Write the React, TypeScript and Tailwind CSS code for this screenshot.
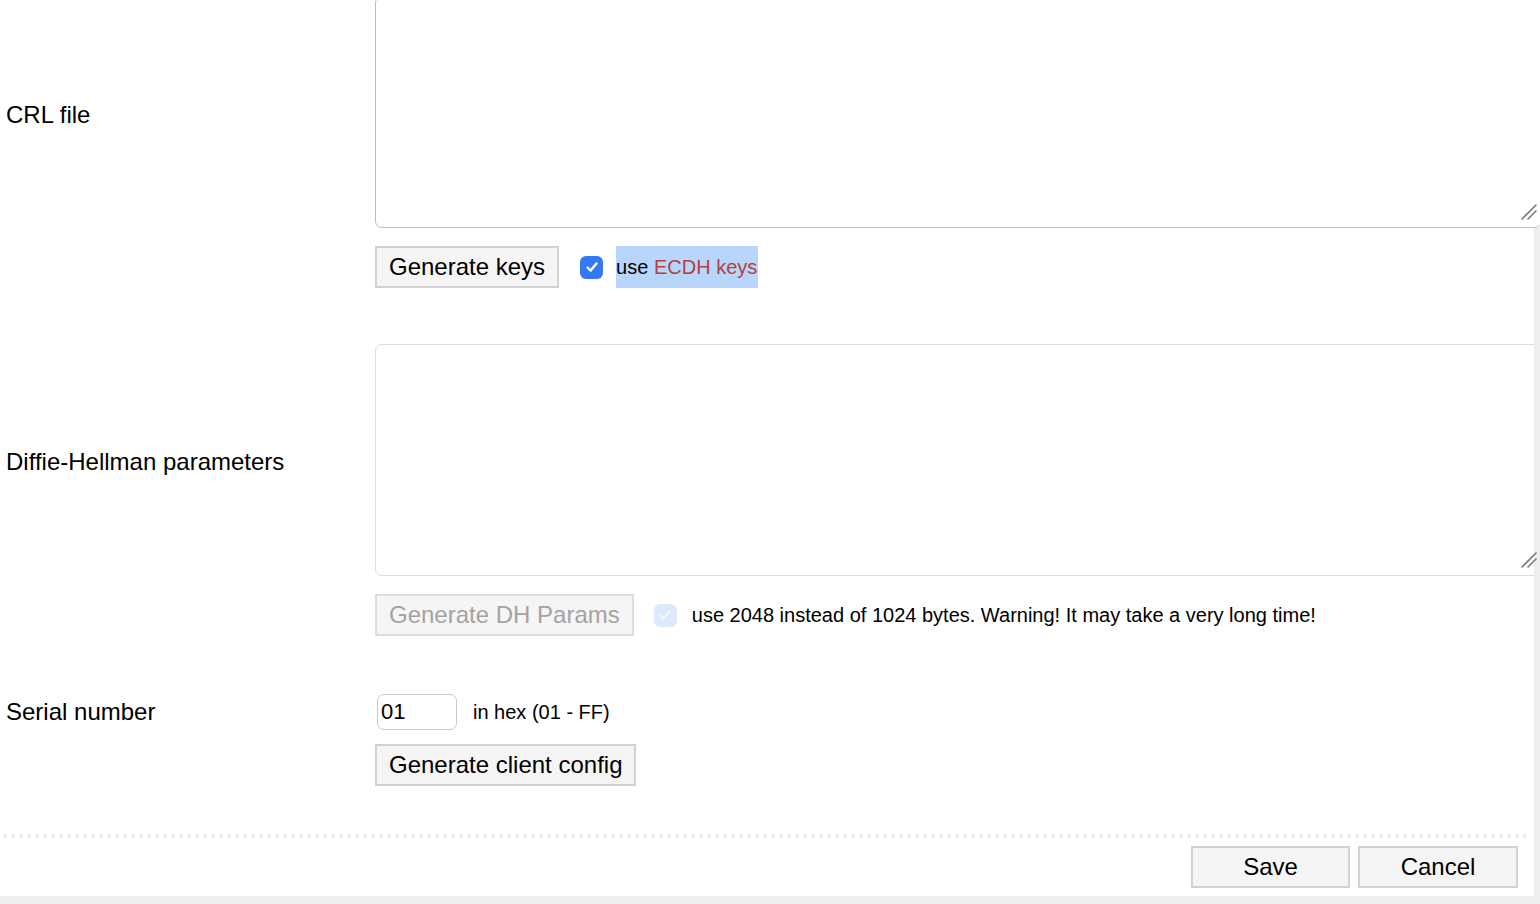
import React from "react";

function Check({ disabled }: { disabled?: boolean }) {
  return (
    <div
      className={
        "w-[23px] h-[23px] rounded-[6px] flex items-center justify-center shrink-0 " +
        (disabled ? "bg-[#dce8fb]" : "bg-[#3478f6]")
      }
    >
      <svg width="16" height="16" viewBox="0 0 16 16">
        <path
          d="M3.5 8.5 L6.6 11.6 L12.5 4.5"
          fill="none"
          stroke={disabled ? "#f3f7fe" : "#ffffff"}
          strokeWidth="2.4"
          strokeLinecap="round"
          strokeLinejoin="round"
        />
      </svg>
    </div>
  );
}

function Btn({ children, disabled, className }: { children: React.ReactNode; disabled?: boolean; className?: string }) {
  return (
    <button
      className={
        "h-[42px] px-[12px] border-2 bg-[#f5f5f5] text-[24px] leading-none whitespace-nowrap " +
        (disabled ? "border-[#dcdcdc] text-[#a3a3a3]" : "border-[#d2d2d2] text-black") +
        " " +
        (className || "")
      }
    >
      {children}
    </button>
  );
}

function Handle() {
  return (
    <svg
      width="17"
      height="16"
      viewBox="0 0 17 16"
      className="absolute left-[1146px] bottom-[8px] z-20 pointer-events-none"
    >
      <path d="M1 15 L15 1" stroke="#7a7a7a" strokeWidth="1.6" strokeLinecap="round" />
      <path d="M7 15 L15 7" stroke="#7a7a7a" strokeWidth="1.6" strokeLinecap="round" />
    </svg>
  );
}

export default function App() {
  return (
    <div
      className="relative h-[904px] w-[1540px] overflow-hidden bg-[#eeeeee] text-black"
      style={{ fontFamily: '"Liberation Sans", Arial, sans-serif' }}
    >
      <div className="h-[896px] w-[1540px] bg-white flex flex-col">
        {/* CRL file */}
        <div className="flex mt-[-4px]">
          <div className="w-[375px] h-[232px] pl-[6px] pt-[6px] flex items-center text-[24px] shrink-0">CRL file</div>
          <div className="relative shrink-0">
            <textarea className="block w-[1167px] h-[232px] resize-none border border-[#bdbdbd] rounded-[7px] bg-white outline-none" />
            <Handle />
          </div>
        </div>
        <div className="ml-[375px] mt-[18px] flex items-center h-[42px]">
          <Btn>Generate keys</Btn>
          <div className="ml-[21px]">
            <Check />
          </div>
          <span className="ml-[13px] h-[42px] flex items-center bg-[#b8d6fb] text-[20px] pr-[1px]">
            use&nbsp;<span className="text-[#b0413e]">ECDH keys</span>
          </span>
        </div>

        {/* Diffie-Hellman */}
        <div className="flex mt-[56px]">
          <div className="w-[375px] h-[232px] pl-[6px] pt-[4px] flex items-center text-[24px] shrink-0">
            Diffie-Hellman parameters
          </div>
          <div className="relative shrink-0">
            <textarea className="block w-[1167px] h-[232px] resize-none border border-[#dcdcdc] rounded-[7px] bg-white outline-none" />
            <Handle />
          </div>
        </div>
        <div className="ml-[375px] mt-[18px] flex items-center h-[42px]">
          <Btn disabled>Generate DH Params</Btn>
          <div className="ml-[20px]">
            <Check disabled />
          </div>
          <span className="ml-[15px] text-[20px]">
            use 2048 instead of 1024 bytes. Warning! It may take a very long time!
          </span>
        </div>

        {/* Serial number */}
        <div className="flex items-center mt-[58px] h-[36px]">
          <div className="w-[375px] pl-[6px] text-[24px] shrink-0">Serial number</div>
          <input
            defaultValue="01"
            className="ml-[2px] w-[80px] h-[36px] border border-[#c8c8c8] rounded-[7px] px-[3px] text-[22px] outline-none"
            style={{ fontFamily: '"Liberation Sans", Arial, sans-serif' }}
          />
          <span className="ml-[16px] text-[20px]">in hex (01 - FF)</span>
        </div>
        <div className="ml-[375px] mt-[14px]">
          <Btn>Generate client config</Btn>
        </div>

        {/* dotted separator */}
        <div className="mt-[48px] ml-[3px] w-[1523px] h-[4px] bg-[linear-gradient(to_right,#eeeeee_50%,transparent_50%)] bg-[length:8px_4px] bg-repeat-x" />

        <div className="mt-[8px] flex justify-end pr-[22px] gap-[8px]">
          <Btn className="w-[159px]">Save</Btn>
          <Btn className="w-[160px]">Cancel</Btn>
        </div>
      </div>
      <div className="absolute right-0 top-[228px] bottom-0 w-[6px] bg-[#eeeeee] z-10" />
    </div>
  );
}
